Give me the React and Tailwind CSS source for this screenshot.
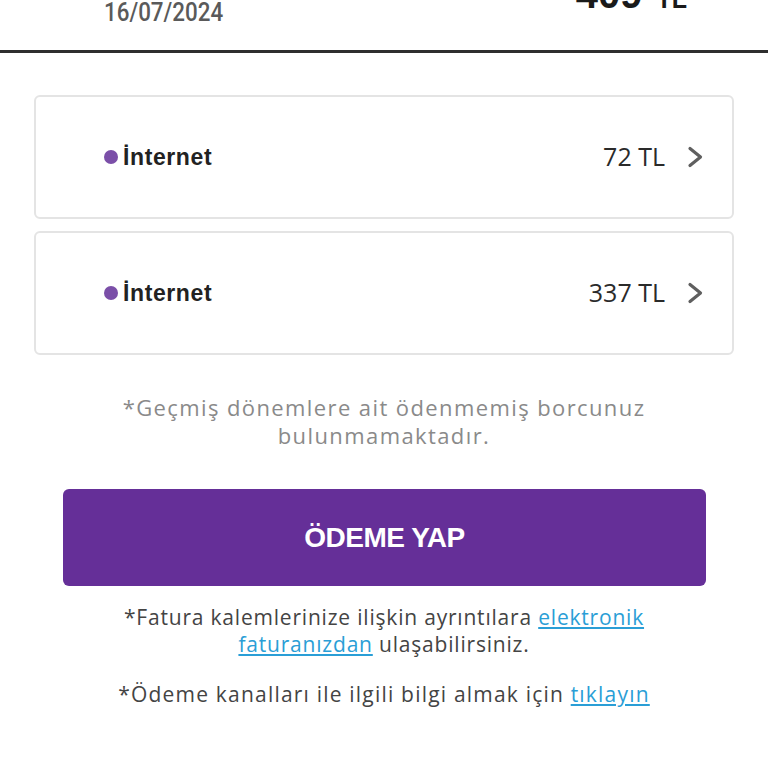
import React from "react";

const items = [
  { id: 1, name: "İnternet", amount: "72 TL" },
  { id: 2, name: "İnternet", amount: "337 TL" },
];

const Chevron = () => (
  <svg width="18" height="24" viewBox="0 0 18 24" fill="none">
    <path d="M4 3.5l10.5 8.5-10.5 8.5" stroke="#5f5f5f" strokeWidth="3.2" strokeLinecap="round" strokeLinejoin="round" />
  </svg>
);

const App = () => {
  return (
    <div className="w-[768px] h-[768px] overflow-hidden bg-white font-['Open_Sans',sans-serif]">
      <div className="h-[53px] flex items-end justify-between pl-[104px] pr-[81px] border-b-[3px] border-[#2e2e2e]">
        <div className="mb-[28px] font-['Roboto',sans-serif] font-medium text-[26px] text-[#5a5a5a] leading-[20px] scale-x-[0.86] origin-left whitespace-nowrap">
          16/07/2024
        </div>
        <div className="mb-[36px] flex items-baseline gap-[14px] font-['Liberation_Sans',sans-serif] text-[#1a1a1a] leading-[30px]">
          <span className="text-[40px] font-bold">409</span>
          <span className="text-[25px] font-bold">TL</span>
        </div>
      </div>

      <div className="mt-[42px] mx-[34px] flex flex-col gap-[12px]">
        {items.map((item) => (
          <div
            key={item.id}
            className="h-[124px] border-2 border-[#e4e4e4] rounded-[6px] flex items-center justify-between pl-[68px] pr-[28px]"
          >
            <div className="flex items-center gap-[5px]">
              <span className="w-[14px] h-[14px] rounded-full bg-[#7b4fa8]"></span>
              <span className="font-['Liberation_Sans',sans-serif] text-[23px] tracking-[0.6px] font-bold text-[#222]">
                {item.name}
              </span>
            </div>
            <div className="flex items-center gap-[21px]">
              <span className="text-[25px] text-[#2a2a2a]">{item.amount}</span>
              <Chevron />
            </div>
          </div>
        ))}
      </div>

      <p className="mt-[38px] text-center text-[22px] tracking-[1.4px] leading-[28px] text-[#8a8a8a] whitespace-nowrap">
        *Geçmiş dönemlere ait ödenmemiş borcunuz
        <br />
        bulunmamaktadır.
      </p>

      <button className="mt-[40px] mx-[63px] w-[643px] h-[97px] rounded-[6px] bg-[#652f98] text-white text-[28px] font-['Liberation_Sans',sans-serif] font-bold tracking-[-0.5px] block">
        ÖDEME YAP
      </button>

      <p className="mt-[18px] text-center text-[21px] tracking-[0.8px] leading-[27px] text-[#444] whitespace-nowrap">
        *Fatura kalemlerinize ilişkin ayrıntılara{" "}
        <a className="text-[#2a9ed6] underline">elektronik</a>
        <br />
        <a className="text-[#2a9ed6] underline">faturanızdan</a> ulaşabilirsiniz.
      </p>

      <p className="mt-[22px] text-center text-[21px] tracking-[1.2px] leading-[28px] text-[#444] whitespace-nowrap">
        *Ödeme kanalları ile ilgili bilgi almak için{" "}
        <a className="text-[#2a9ed6] underline">tıklayın</a>
      </p>
    </div>
  );
};

export default App;
